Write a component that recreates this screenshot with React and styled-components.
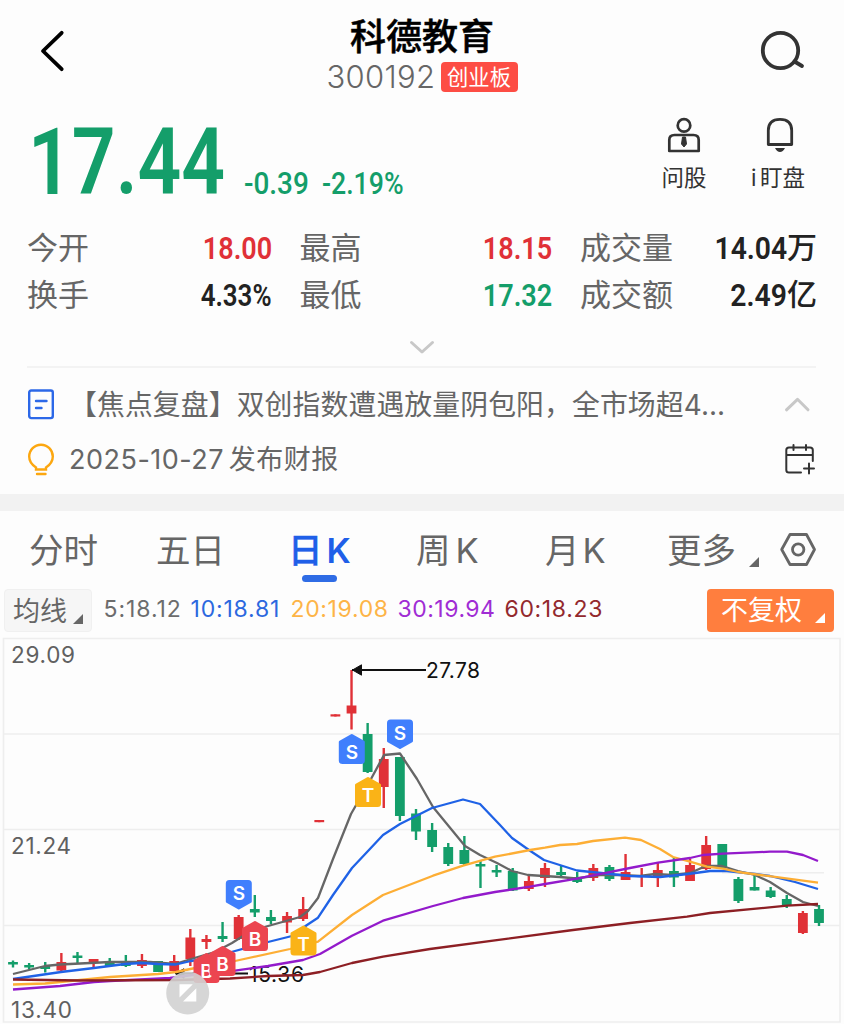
import React from "react";
import styled, { createGlobalStyle } from "styled-components";

const GREEN = "#149e6a";
const RED = "#e03137";

const Global = createGlobalStyle`
  * { box-sizing: border-box; }
  body { margin: 0; background: #fdfdfd; }
  svg { display: block; overflow: visible; }
`;

const Screen = styled.main`
  width: 844px;
  height: 1024px;
  overflow: hidden;
  display: flex;
  flex-direction: column;
  background: #fdfdfd;
  color: #666;
  font-family: Inter, "Noto Sans CJK SC", sans-serif;
  white-space: nowrap;
`;

const Header = styled.header`
  height: 100px;
  padding: 0 39px 0 39px;
  display: grid;
  grid-template-columns: 120px 1fr 120px;
`;
const BackIcon = styled.svg`margin-top: 30px;`;
const SearchIcon = styled.svg`margin: 30px 0 0 auto;`;
const TitleBlock = styled.div`
  display: flex;
  flex-direction: column;
  align-items: center;
`;
const Title = styled.h1`
  margin: 16px 0 0;
  height: 42px;
  font-size: 36px;
  line-height: 42px;
  font-weight: 500;
  -webkit-text-stroke: 0.5px #000;
  color: #000;
`;
const CodeLine = styled.div`
  display: flex;
  align-items: center;
  gap: 7px;
  margin-top: 4px;
  height: 30px;
`;
const Code = styled.span`
  font-size: 31px;
  font-weight: 300;
  width: 107px;
  line-height: 30px;
  letter-spacing: 0.3px;
  color: #666;
`;
const Badge = styled.span`
  width: 77px;
  height: 30px;
  border-radius: 4px;
  background: #fd4d44;
  color: #fff;
  font-size: 21.3px;
  line-height: 30px;
  text-align: center;
`;

const Quote = styled.section`
  height: 124px;
  padding: 0 39px 0 28px;
  display: flex;
`;
const Condensed = styled.span`
  display: block;
  font-family: Roboto, "Noto Sans CJK SC", sans-serif;
  font-weight: ${(p) => p.$weight || 600};
  font-size: ${(p) => p.$size}px;
  line-height: 1;
  color: ${(p) => p.$color};
  transform: scaleX(${(p) => p.$scale || 0.83});
  transform-origin: ${(p) => p.$origin || "left"} center;
`;
const PriceBox = styled.div`
  width: 216px;
  padding-top: 16px;
`;
const ChangeBox = styled.div`
  width: ${(p) => p.$w}px;
  padding-top: 68px;
`;
const Tools = styled.div`
  margin-left: auto;
  display: flex;
  gap: 44px;
  padding-top: 16px;
`;
const Tool = styled.div`
  width: ${(p) => p.$w}px;
  display: flex;
  flex-direction: column;
  align-items: center;
  gap: 11px;
  font-size: 22.5px;
  line-height: 30px;
  word-spacing: -3px;
  color: #333;
`;

const Stats = styled.section`
  height: 142px;
  padding: 0 27px 0 27px;
`;
const StatGrid = styled.div`
  display: grid;
  grid-template-columns: 245px 253px 237px;
  grid-auto-rows: 47px;
  column-gap: 27.5px;
`;
const Stat = styled.div`
  display: flex;
  justify-content: space-between;
  align-items: center;
`;
const StatLabel = styled.span`
  font-size: 31px;
  line-height: 48px;
`;
const StatValue = styled.span`
  display: flex;
  align-items: center;
  justify-content: flex-end;
  color: ${(p) => p.$color};
`;
const Unit = styled.span`
  font-size: 30px;
  line-height: 47px;
  font-weight: 500;
`;
const Expand = styled.div`
  display: flex;
  justify-content: center;
  padding-top: 22px;
`;

const News = styled.section`
  height: 128px;
  margin: 0 28px 0 27px;
  border-top: 2px solid #f3f3f3;
  padding-top: 9px;
`;
const NewsRow = styled.div`
  height: 55px;
  display: grid;
  grid-template-columns: 42px 1fr 32px;
  align-items: center;
`;
const NewsText = styled.span`
  font-size: ${(p) => p.$size}px;
  line-height: 40px;
  letter-spacing: ${(p) => p.$track || 0}px;
  word-spacing: ${(p) => p.$word || 0}px;
`;
const Divider = styled.div`
  height: 17px;
  background: #f2f2f2;
`;

const Tabs = styled.nav`
  height: 78px;
  padding-left: 29px;
  display: grid;
  grid-template-columns: 127px 132px 128px 129px 122px 113px 36px;
`;
const Tab = styled.div`
  position: relative;
  display: flex;
  gap: ${(p) => p.$gap || 0}px;
  font-size: 34.5px;
  line-height: 79px;
  height: 78px;
  color: ${(p) => (p.$active ? "#1f5fe8" : "#666")};
  font-weight: ${(p) => (p.$active ? 600 : 400)};
`;
const ActiveDay = styled.span`
  font-weight: 500;
  -webkit-text-stroke: 0.4px currentColor;
`;
const Underline = styled.i`
  position: absolute;
  left: 14px;
  top: 64px;
  width: 35px;
  height: 7px;
  border-radius: 4px;
  background: #2f6ce5;
`;
const Corner = styled.i`
  width: 10px;
  height: 10px;
  background: ${(p) => p.$color || "#666"};
  clip-path: polygon(100% 0, 100% 100%, 0 100%);
  margin-top: ${(p) => p.$top}px;
`;
const Legend = styled.div`
  height: 49px;
  padding: 0 10px 0 4px;
  display: flex;
`;
const MaButton = styled.div`
  width: 88px;
  height: 43px;
  padding: 0 8px 0 8px;
  display: flex;
  justify-content: space-between;
  border-radius: 4px;
  border: 1px solid #f0f0f0;
  background: #f6f6f6;
  font-size: 27px;
  line-height: 43px;
`;
const MaList = styled.div`
  display: flex;
  padding-left: 11.5px;
`;
const Ma = styled.span`
  width: ${(p) => p.$w}px;
  font-size: 23px;
  line-height: 41px;
  letter-spacing: ${(p) => p.$track}px;
  color: ${(p) => p.$color};
`;
const AdjustButton = styled(MaButton)`
  margin-left: auto;
  width: 127px;
  padding: 0 9px 0 14px;
  border: 0;
  background: #ff7e3e;
  color: #fff;
`;
const Chart = styled.svg`flex: none;`;

const CANDLES = [
  ["g", 962, 964.5, 960.5, 967.5], ["g", 965, 967.5, 963, 969], ["g", 966, 969, 962, 972.5],
  ["r", 962, 970.5, 953, 971], ["g", 955.5, 958, 952, 964], ["r", 959, 963, 959, 967],
  ["g", 961, 966, 958, 966], ["g", 962, 966, 955, 967], ["r", 960, 966, 954, 968],
  ["g", 961, 972, 961, 972], ["r", 961, 971, 955, 972], ["r", 937.5, 959, 929, 966],
  ["r", 939, 942, 935, 949], ["g", 936, 939, 922, 942], ["r", 917, 939, 915, 940],
  ["g", 909, 912.5, 895, 917], ["g", 917, 921, 910, 924], ["r", 916, 922.5, 912, 933],
  ["r", 909, 919, 897, 921], ["r", 820, 822.2, 820, 822.2], ["r", 714.3, 716.5, 714.3, 716.5],
  ["r", 705.5, 713.5, 670, 729.5], ["g", 734, 772, 723, 773], ["r", 759, 787, 748, 808],
  ["g", 757, 816, 757, 821], ["g", 813.5, 831.5, 809, 840], ["g", 830, 847, 823, 852],
  ["g", 847, 864, 843, 866], ["g", 850, 864, 836, 865], ["g", 864, 866.5, 861, 888],
  ["g", 870, 872.5, 865, 877], ["g", 871, 890.5, 868, 891], ["r", 881, 889, 875, 891],
  ["r", 868, 878, 863, 887], ["g", 872, 875, 865, 877], ["g", 877, 882, 872, 883],
  ["r", 868, 878, 864, 881], ["g", 867, 879, 865, 881], ["r", 872, 880, 854, 880],
  ["r", 875, 877, 868, 887], ["r", 870, 878, 862, 887], ["g", 871, 877.5, 858, 887],
  ["r", 865, 881, 859, 881], ["r", 845, 869, 836, 870], ["g", 844, 868, 844, 868],
  ["g", 879, 901, 877, 903], ["g", 887, 890.5, 875, 890.5], ["g", 890.5, 897, 887, 898],
  ["g", 899, 906, 895, 908], ["r", 913, 933, 911, 934], ["g", 909, 923, 905, 926],
];

const LINES = [
  ["#666", "13,974 45,966 60,964.5 110,962 150,962 175,964 191,959 215,952 232,943 243,936 255,930 268,926 286,921 300,917 308,911 318,898 333,859 351,814 371,779 384,755 400,753.5 417,779 433,807 465,846 480,855 497,863 512,871 528,875 560,877 576,878.5 600,875 620,875 640,876 655,874 672,875 690,873 706,866 722,866 738,871 755,875 770,882 787,893 803,902 818,906"],
  ["#1f62e6", "13,979 61,972 94,968 125,964 141,963 158,964 176,964.5 191,961 210,958 235,951 268,942 292,936 307,925 318,917.7 333,895 352,868 368,851 383,835 400,824 432,808 463,799.5 480,804 500,825 512,838 530,850.7 544,860 577,870.5 630,876 660,877 688,874 710,871 727,871 755,874 770,876 795,882 818,889"],
  ["#fdae35", "13,984.5 45,983.5 60,982 110,977 158,974 176,972 200,967 235,961 290,949 318,941.7 352,915 383,895 433,875.7 463,865.7 495,856.7 530,850 545,847.7 560,845 577,844 593,841 625,837.7 641,840 660,849 673,857 690,861.7 707,866.7 723,868.7 738,872 818,882.7"],
  ["#931acb", "13,989.5 60,986 94,982 110,981 170,978 200,974 235,970.7 268,966 303,960 320,954 352,935.7 383,920.7 433,906 463,898 495,892 530,886.7 545,884 577,878.7 607,872.7 630,868 658,862.7 690,858 703,855 723,853.7 770,851.7 787,851.7 803,855 818,861"],
  ["#8d1f24", "13,979.5 80,980.5 176,980 230,978.5 268,976 303,975 320,972 352,963 383,956.7 430,949 573,930 630,923 687,916.7 710,913 787,905.7 818,904"],
];

const MARKS = [
  ["B", 206.5, 953, "#ec4550", true], ["B", 222.5, 946, "#ec4550", true], ["S", 238.8, 880, "#407ffd", false],
  ["B", 255, 921, "#ec4550", true], ["T", 303.5, 925.5, "#fab317", true], ["S", 351.8, 734, "#407ffd", true],
  ["T", 368, 777, "#fab317", true], ["S", 400, 719.5, "#407ffd", false],
];

function Mark({ letter, x, y, color, up }) {
  const shape = up
    ? "M0 1.5 L11.5 8 V26.5 Q11.5 28.5 9.5 28.5 H-9.5 Q-11.5 28.5 -11.5 26.5 V8 Z"
    : "M-9.5 1.5 H9.5 Q11.5 1.5 11.5 3.5 V21.5 L0 28 L-11.5 21.5 V3.5 Q-11.5 1.5 -9.5 1.5 Z";
  return (
    <g transform={`translate(${x} ${y})`}>
      <path d={shape} fill={color} stroke={color} strokeWidth="3" strokeLinejoin="round" />
      <text x="0" y={up ? 25 : 20} fontSize="19" fontWeight="600" textAnchor="middle" fill="#fff">{letter}</text>
    </g>
  );
}

function KChart() {
  return (
    <Chart width="844" height="386" viewBox="0 638 844 386" fontFamily="Inter, sans-serif">
      <g stroke="#eeeeee" strokeWidth="1.6" fill="none">
        <path d="M3.5 638.5H840V1022H3.5Z" />
        <path d="M4 734H840M4 829.5H840M4 925.5H840M722 872.7H824" />
      </g>
      <g fontSize="22.5" fill="#606060">
        <text x="11" y="662.7" textLength="64">29.09</text>
        <text x="11" y="854" textLength="60">21.24</text>
        <text x="11" y="1017.5" textLength="61">13.40</text>
      </g>
      {CANDLES.map(([c, top, bottom, high, low], i) => {
        const x = 13 + 16.12 * i;
        const fill = c === "g" ? GREEN : RED;
        return (
          <g key={i} fill={fill}>
            <rect x={x - 1.2} y={high} width="2.4" height={low - high} />
            <rect x={x - 4.9} y={top} width="9.8" height={bottom - top} />
          </g>
        );
      })}
      <g stroke="#111" strokeWidth="2" fill="#111">
        <path d="M352 670H426" />
        <path d="M352.5 670L361.5 664.8V675.2Z" strokeWidth="1" />
        <path d="M176 973.5H248" />
        <path d="M175 973.5L184 968.8V978.2Z" strokeWidth="1" />
      </g>
      <g fontSize="21" fill="#111">
        <text x="426" y="678.3" textLength="54">27.78</text>
        <text x="249" y="981.7" textLength="55">15.36</text>
      </g>
      {LINES.map(([color, points]) => (
        <polyline key={color} points={points} fill="none" stroke={color} strokeWidth="2.3" strokeLinejoin="round" />
      ))}
      {MARKS.map(([letter, x, y, color, up]) => (
        <Mark key={x} letter={letter} x={x} y={y} color={color} up={up} />
      ))}
      <circle cx="187.7" cy="993" r="21.5" fill="#d2d2d2" fillOpacity="0.9" />
      <path d="M179.5 984.3H192.8L179.5 997.6ZM196.3 988.2V1001.5H183Z" fill="#fff" />
    </Chart>
  );
}

const STATS = [
  ["今开", "18.00", RED, 0.845], ["最高", "18.15", RED, 0.845], ["成交量", "14.04", "#222", 0.885, "万"],
  ["换手", "4.33%", "#222", 0.81], ["最低", "17.32", GREEN, 0.845], ["成交额", "2.49", "#222", 0.885, "亿"],
];

const AVERAGES = [
  ["5:18.12", "#6c6c6c", 87, 0.95], ["10:18.81", "#2c68df", 100, 0.8], ["20:19.08", "#fdb447", 107, 0.65],
  ["30:19.94", "#a02cd4", 107, 0.5], ["60:18.23", "#93292d", 110, 0.65],
];

export default function App() {
  return (
    <Screen>
      <Global />
      <Header>
        <BackIcon width="26" height="42" fill="none" stroke="#000" strokeWidth="3.8" strokeLinecap="round" strokeLinejoin="round">
          <path d="M22.7 2.8L4 21L22.7 39.2" />
        </BackIcon>
        <TitleBlock>
          <Title>科德教育</Title>
          <CodeLine>
            <Code>300192</Code>
            <Badge>创业板</Badge>
          </CodeLine>
        </TitleBlock>
        <SearchIcon width="44" height="42" fill="none" stroke="#333" strokeWidth="3.8" strokeLinecap="round">
          <circle cx="19.5" cy="20.5" r="17.7" />
          <path d="M33.5 31.5L41 36" />
        </SearchIcon>
      </Header>

      <Quote>
        <PriceBox><Condensed $size={93} $color={GREEN} $scale={0.825}>17.44</Condensed></PriceBox>
        <ChangeBox $w={78}><Condensed $size={31} $color={GREEN} $weight={500} $scale={0.9}>-0.39</Condensed></ChangeBox>
        <ChangeBox $w={90}><Condensed $size={31} $color={GREEN} $weight={500} $scale={0.86}>-2.19%</Condensed></ChangeBox>
        <Tools>
          <Tool $w={46}>
            <svg width="34" height="36" fill="none" stroke="#333" strokeWidth="2.7" strokeLinejoin="round">
              <circle cx="17" cy="9.4" r="6.3" />
              <path d="M2.3 35V24Q2.3 19 7.5 19H26.5Q31.7 19 31.7 24V35Z" />
              <path d="M15.5 21H18.5L19.5 28L17 31L14.5 28Z" fill="#333" strokeWidth="1" />
            </svg>
            问股
          </Tool>
          <Tool $w={54}>
            <svg width="30" height="36" fill="none" stroke="#333" strokeWidth="2.8" strokeLinejoin="round">
              <path d="M5.3 28.5V14.5Q5.3 3.3 17 3.3Q28.7 3.3 28.7 14.5V28.5Z" />
              <path d="M12 32H22Q20 36 17 36Q14 36 12 32Z" fill="#333" stroke="none" />
            </svg>
            <span>i 盯盘</span>
          </Tool>
        </Tools>
      </Quote>

      <Stats>
        <StatGrid>
          {STATS.map(([label, value, color, scale, unit]) => (
            <Stat key={label}>
              <StatLabel>{label}</StatLabel>
              <StatValue $color={color}>
                <Condensed $size={32} $color={color} $origin="right" $scale={scale}>{value}</Condensed>
                {unit && <Unit>{unit}</Unit>}
              </StatValue>
            </Stat>
          ))}
        </StatGrid>
        <Expand>
          <svg width="26" height="14" fill="none" stroke="#c8c8c8" strokeWidth="3" strokeLinecap="round" strokeLinejoin="round">
            <path d="M2.5 2.5L13 12L23.5 2.5" />
          </svg>
        </Expand>
      </Stats>

      <News>
        <NewsRow>
          <svg width="28" height="32" fill="none" stroke="#2c68e8" strokeWidth="2.4" strokeLinecap="round">
            <rect x="2.2" y="1.5" width="23.6" height="27.6" rx="2" />
            <path d="M9 12H19.5M9 19H14.5" />
          </svg>
          <NewsText $size={27.85} $track={0.1}>【焦点复盘】双创指数遭遇放量阴包阳，全市场超4…</NewsText>
          <svg width="32" height="16" fill="none" stroke="#c8c8c8" strokeWidth="3" strokeLinecap="round" strokeLinejoin="round">
            <path d="M2.5 12.8L13.5 2.3L24 12.8" />
          </svg>
        </NewsRow>
        <NewsRow>
          <svg width="28" height="34" fill="none" stroke="#fca710" strokeWidth="2.4" strokeLinecap="round">
            <path d="M9 26.5V24.5Q2.2 20 2.2 13.5A11.8 11.8 0 0 1 25.8 13.5Q25.8 20 19 24.5V26.5Z" />
            <path d="M10 31H18.5" />
          </svg>
          <NewsText $size={27} $track={0.5} $word={-3.5}>2025-10-27 发布财报</NewsText>
          <svg width="32" height="32" fill="none" stroke="#333" strokeWidth="2" strokeLinecap="round">
            <path d="M17 28.5H5Q2.3 28.5 2.3 26V6Q2.3 3.4 5 3.4H26Q28.8 3.4 28.8 6V17M2.3 11H28.8M9.5 1V6M22 1V6M20 24.5H30M25 19.5V29.5" />
          </svg>
        </NewsRow>
      </News>
      <Divider />

      <Tabs>
        <Tab>分时</Tab>
        <Tab>五日</Tab>
        <Tab $active $gap={4}><ActiveDay>日</ActiveDay><span>K</span><Underline /></Tab>
        <Tab $gap={5}><span>周</span><span>K</span></Tab>
        <Tab $gap={3}><span>月</span><span>K</span></Tab>
        <Tab $gap={13}><span>更多</span><Corner $top={46} /></Tab>
        <Tab>
          <svg width="36" height="78" fill="none" stroke="#666" strokeWidth="2.8" strokeLinejoin="round">
            <path d="M10 23.5H26.5L34.5 38.5L26.5 53.5H10L1.7 38.5Z" />
            <circle cx="18.2" cy="38.5" r="5.7" />
          </svg>
        </Tab>
      </Tabs>

      <Legend>
        <MaButton>均线<Corner $top={24} /></MaButton>
        <MaList>
          {AVERAGES.map(([text, color, w, track]) => <Ma key={text} $color={color} $w={w} $track={track}>{text}</Ma>)}
        </MaList>
        <AdjustButton>不复权<Corner $color="#fff" $top={24} /></AdjustButton>
      </Legend>
      <KChart />
    </Screen>
  );
}
